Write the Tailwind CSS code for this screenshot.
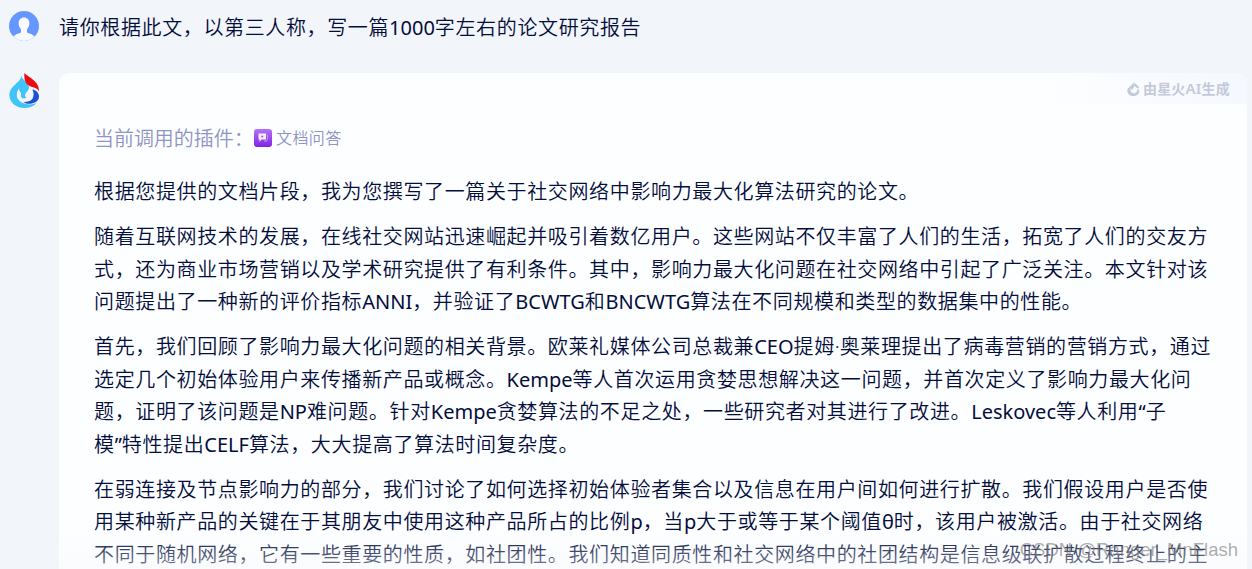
<!DOCTYPE html>
<html lang="zh-CN">
<head>
    <meta charset="UTF-8">
    <meta name="viewport" content="width=device-width, initial-scale=1.0">
    <title>星火 - 论文研究报告</title>
    <script src="https://cdn.jsdelivr.net/npm/@tailwindcss/browser@4"></script>
</head>
<body class="relative h-[569px] overflow-hidden bg-[#f2f5f9] font-['Noto_Sans','Noto_Sans_CJK_SC',sans-serif] text-xl font-[350] text-[#030d3c]">
    <!-- User message -->
    <div class="flex h-[73px] items-start pl-[9px]">
        <svg class="mt-[11px] h-[30px] w-[30px] shrink-0" viewBox="0 0 30 30">
            <defs><clipPath id="avatar"><circle cx="15" cy="15" r="15"/></clipPath></defs>
            <g clip-path="url(#avatar)">
                <rect width="30" height="30" fill="#6697ff"/>
                <path fill="#f8faff" d="M15 6.500c3.300 0 5.400 2.300 5.400 5.600 0 2.700-1 4.600-2.400 6.100v2.200c0 1.300.9 1.700 2.300 2 2.700.7 4.700 1.900 5.500 3.600L24 31H6l-2-5c1-1.700 3-2.900 5.700-3.600 1.400-.3 2.300-.7 2.300-2v-2.200c-1.400-1.500-2.400-3.400-2.400-6.100 0-3.300 2.100-5.600 5.400-5.600z"/>
            </g>
        </svg>
        <p class="mt-3 ml-5 whitespace-nowrap leading-[32px] tracking-[0.63px]">请你根据此文，以第三人称，写一篇<span class="font-normal tracking-normal">1000</span>字左右的论文研究报告</p>
    </div>

    <!-- Answer -->
    <div class="flex items-start pl-[9px]">
        <svg class="h-[36px] w-[31px] shrink-0" viewBox="0 0 31 36">
            <path fill="#40c4fa" d="M12 3C12.500 9 .8 12.500.4 21.500.2 29.500 7 35 15.200 35c5 0 9.500-1.500 12.500-5-3.700 1.500-7.700 1.800-11.200.8C11 29.500 7.500 26 7.800 21.500c.1-2.500 1-4.300 2.200-6 .2 2.200 1 3.500 2 4.500.3 1.500-.3 3-.2 4 1 1.500 3.500 2 5.700.5-2.500-1.500-1.500-3.500.3-5.500 2.500-2.700 3-5 1-8.200C17 8 13.500 6.500 12 3z"/>
            <path fill="#ee0b0d" d="M15.500 0C19.500 4.500 30.500 8 30 18.200c-1.600-2.700-4.200-3.600-7.500-4.500C17.500 12 14.500 8 15.500 0z"/>
            <path fill="#1d50d5" d="M23.300 16.500c4.200.7 6.700 3.500 6.700 7 0 5-5.500 7.500-10.500 7.300-2-.1-3.500-.6-5-1.800 5.500.3 9.500-1.500 10-6.400.3-2.500-.3-4.300-1.200-6.100z"/>
        </svg>
        <div class="relative ml-[19px] h-[496px] w-[1188px] overflow-hidden rounded-t-[10px] bg-[#fdfeff]">
            <div class="absolute top-0 right-0 flex h-[31px] w-[210px] items-center justify-end bg-linear-to-r from-[#fdfeff] to-[#f5f8fe] pr-[17px] text-[#c4cad9]">
                <svg class="mr-[3px] h-[14px] w-[13px]" viewBox="0 0 31 35">
                    <path fill="currentColor" d="M12 3C13 9 0 13 0 21c0 8 7 14 15 14 9 0 15-5 15-12 0-3-2-5-5-6 1 6-2 11-8 11-5 0-9-3-9-8l1-4 4 6c-1-4 1-6 4-9 2-4-1-7-5-10z"/>
                    <path fill="currentColor" d="M15 0c5 5 15 9 15 17-2-2-5-2-8-4-5-3-8-7-7-13z"/>
                </svg>
                <span class="whitespace-nowrap text-sm leading-none font-semibold tracking-[0.2px]">由星火<span class="text-[15px]">AI</span>生成</span>
            </div>

            <div class="mt-[49px] flex h-[33px] items-center pl-[35px] whitespace-nowrap text-[#8f94c3]">
                <span class="w-[160px] tracking-[-0.05px]">当前调用的插件：</span>
                <svg class="-mt-0.5 h-[18px] w-[18px] shrink-0" viewBox="0 0 18 18">
                    <defs>
                        <linearGradient id="plugin" x1="0" y1="0" x2="0" y2="1">
                            <stop offset="0" stop-color="#b572f5"/>
                            <stop offset="1" stop-color="#7f22e4"/>
                        </linearGradient>
                    </defs>
                    <rect width="18" height="18" rx="3" fill="url(#plugin)"/>
                    <path fill="#f8f0ff" d="M4.500 4.500h7.500v6H7.500l-2 2.500v-2.500h-1z"/>
                    <path fill="none" stroke="#c79bf5" d="M13 5.500c1 1.500.8 4.500-.5 6.500H10"/>
                    <circle cx="8.300" cy="7.500" r="1.100" fill="#a15bed"/>
                </svg>
                <span class="-mt-0.5 ml-1 text-base tracking-[0.4px]">文档问答</span>
            </div>

            <div class="mt-[21px] flex flex-col gap-[12.600px] pl-[35px] leading-[32.500px] tracking-[0.63px] whitespace-nowrap">
                <p>根据您提供的文档片段，我为您撰写了一篇关于社交网络中影响力最大化算法研究的论文。</p>
                <p>随着互联网技术的发展，在线社交网站迅速崛起并吸引着数亿用户。这些网站不仅丰富了人们的生活，拓宽了人们的交友方<br>式，还为商业市场营销以及学术研究提供了有利条件。其中，影响力最大化问题在社交网络中引起了广泛关注。本文针对该<br>问题提出了一种新的评价指标<span class="font-normal tracking-normal">ANNI</span>，并验证了<span class="font-normal tracking-normal">BCWTG</span>和<span class="font-normal tracking-normal">BNCWTG</span>算法在不同规模和类型的数据集中的性能。</p>
                <p>首先，我们回顾了影响力最大化问题的相关背景。欧莱礼媒体公司总裁兼<span class="font-normal tracking-normal">CEO</span>提姆<span class="tracking-normal">·</span>奥莱理提出了病毒营销的营销方式，通过<br>选定几个初始体验用户来传播新产品或概念。<span class="font-normal tracking-normal">Kempe</span>等人首次运用贪婪思想解决这一问题，并首次定义了影响力最大化问<br>题，证明了该问题是<span class="font-normal tracking-normal">NP</span>难问题。针对<span class="font-normal tracking-normal">Kempe</span>贪婪算法的不足之处，一些研究者对其进行了改进。<span class="font-normal tracking-normal">Leskovec</span>等人利用<span class="font-normal tracking-normal">“</span>子<br>模<span class="font-normal tracking-normal">”</span>特性提出<span class="font-normal tracking-normal">CELF</span>算法，大大提高了算法时间复杂度。</p>
                <p>在弱连接及节点影响力的部分，我们讨论了如何选择初始体验者集合以及信息在用户间如何进行扩散。我们假设用户是否使<br>用某种新产品的关键在于其朋友中使用这种产品所占的比例<span class="font-normal tracking-normal">p</span>，当<span class="font-normal tracking-normal">p</span>大于或等于某个阈值<span class="font-normal tracking-normal">θ</span>时，该用户被激活。由于社交网络<br>不同于随机网络，它有一些重要的性质，如社团性。我们知道同质性和社交网络中的社团结构是信息级联扩散过程终止的主</p>
            </div>

            <!-- Bottom fade -->
            <div class="absolute inset-x-0 bottom-0 h-9 bg-linear-to-b from-[#f7f9fd]/0 to-[#f7f9fd]/50"></div>
        </div>
    </div>

    <!-- Watermark -->
    <div class="absolute right-[14px] bottom-[7px] whitespace-nowrap font-['Liberation_Sans',sans-serif] text-[18.500px] leading-6 text-[#777]/60">CSDN @Ranger_MnFlash</div>
</body>
</html>
